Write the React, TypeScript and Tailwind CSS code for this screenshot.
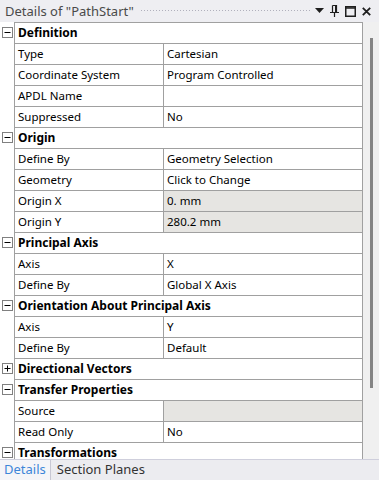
type Row =
  | { kind: 'cat'; label: string; open: boolean }
  | { kind: 'prop'; label: string; value: string; gray?: boolean };

const rows: Row[] = [
  { kind: 'cat', label: 'Definition', open: true },
  { kind: 'prop', label: 'Type', value: 'Cartesian' },
  { kind: 'prop', label: 'Coordinate System', value: 'Program Controlled' },
  { kind: 'prop', label: 'APDL Name', value: '' },
  { kind: 'prop', label: 'Suppressed', value: 'No' },
  { kind: 'cat', label: 'Origin', open: true },
  { kind: 'prop', label: 'Define By', value: 'Geometry Selection' },
  { kind: 'prop', label: 'Geometry', value: 'Click to Change' },
  { kind: 'prop', label: 'Origin X', value: '0. mm', gray: true },
  { kind: 'prop', label: 'Origin Y', value: '280.2 mm', gray: true },
  { kind: 'cat', label: 'Principal Axis', open: true },
  { kind: 'prop', label: 'Axis', value: 'X' },
  { kind: 'prop', label: 'Define By', value: 'Global X Axis' },
  { kind: 'cat', label: 'Orientation About Principal Axis', open: true },
  { kind: 'prop', label: 'Axis', value: 'Y' },
  { kind: 'prop', label: 'Define By', value: 'Default' },
  { kind: 'cat', label: 'Directional Vectors', open: false },
  { kind: 'cat', label: 'Transfer Properties', open: true },
  { kind: 'prop', label: 'Source', value: '', gray: true },
  { kind: 'prop', label: 'Read Only', value: 'No' },
  { kind: 'cat', label: 'Transformations', open: true },
];

function Toggle({ open }: { open: boolean }) {
  return (
    <svg width="11" height="11" viewBox="0 0 11 11">
      <rect x="0.5" y="0.5" width="10" height="10" fill="white" stroke="#808080" />
      <line x1="2.5" y1="5.5" x2="8.5" y2="5.5" stroke="#000" />
      {!open && <line x1="5.5" y1="2.5" x2="5.5" y2="8.5" stroke="#000" />}
    </svg>
  );
}

export default function App() {
  return (
    <div
      className="w-[379px] h-[480px] flex flex-col bg-white overflow-hidden text-[11.5px] text-black"
      style={{ fontFamily: '"Noto Sans", "Open Sans", sans-serif' }}
    >
      {/* title bar */}
      <div className="h-[22px] flex items-center bg-[#eeeef2] pl-[5px] pr-[8px] shrink-0">
        <span className="text-[13px] text-[#4a4a4a] leading-none whitespace-nowrap">Details of "PathStart"</span>
        <div className="flex-1 ml-[6px] mr-[4px] h-[4px] bg-[radial-gradient(#b0b0bc_0.8px,transparent_0.9px)] bg-[length:3px_3px]" />
        <div className="flex items-center gap-[6px]">
          <svg width="9" height="6" viewBox="0 0 9 6">
            <path d="M0 0 H9 L4.5 5 Z" fill="#1e1e1e" />
          </svg>
          <svg width="9" height="12" viewBox="0 0 9 12">
            <path d="M2.5 0.5 H6.5 V7 M2.5 0.5 V7 M0 7.5 H9 M4.5 7.5 V12" stroke="#1e1e1e" fill="none" strokeWidth="1.2" />
            <rect x="5" y="0.5" width="1.5" height="6.5" fill="#1e1e1e" />
          </svg>
          <svg width="11" height="11" viewBox="0 0 11 11">
            <rect x="0.75" y="0.75" width="9.5" height="9.5" fill="none" stroke="#1e1e1e" strokeWidth="1.5" />
            <line x1="0" y1="2" x2="11" y2="2" stroke="#1e1e1e" strokeWidth="1.5" />
          </svg>
          <svg width="9" height="9" viewBox="0 0 9 9">
            <path d="M0.8 0.8 L8.2 8.2 M8.2 0.8 L0.8 8.2" stroke="#1e1e1e" strokeWidth="1.8" />
          </svg>
        </div>
      </div>

      {/* grid + scrollbar */}
      <div className="flex flex-1 min-h-0">
        <div className="w-[363px] overflow-hidden">
          {rows.map((r, i) => (
            <div key={i} className="flex h-[21px]">
              <div className="w-[14px] flex items-center justify-center pl-[1px]">
                {r.kind === 'cat' && <Toggle open={r.open} />}
              </div>
              {r.kind === 'cat' ? (
                <div className="flex-1 border-t border-l border-r border-[#a0a0a0] flex items-center pl-[3px] font-bold text-[12px] whitespace-nowrap">
                  {r.label}
                </div>
              ) : (
                <div className="flex-1 flex border-t border-l border-r border-[#a0a0a0]">
                  <div className="w-[149px] border-r border-[#a0a0a0] flex items-center pl-[3px] whitespace-nowrap">
                    {r.label}
                  </div>
                  <div className={`flex-1 flex items-center pl-[3px] whitespace-nowrap ${r.gray ? 'bg-[#e6e5e2]' : ''}`}>
                    {r.value}
                  </div>
                </div>
              )}
            </div>
          ))}
        </div>
        <div className="w-[16px] bg-[#f0f0f0] pt-[16px] pl-[7px]">
          <div className="w-[3px] h-[350px] bg-[#858585]" />
        </div>
      </div>

      {/* tabs */}
      <div className="h-[21px] shrink-0 flex bg-[#ececf0] border-t border-[#cfcfdc]">
        <div className="px-[4px] flex items-center bg-[#f5f5f8] border-r border-[#c8c8d4] text-[#3d86d8] text-[13px]">Details</div>
        <div className="px-[6px] flex items-center text-[#333] text-[13px]">Section Planes</div>
      </div>
    </div>
  );
}
